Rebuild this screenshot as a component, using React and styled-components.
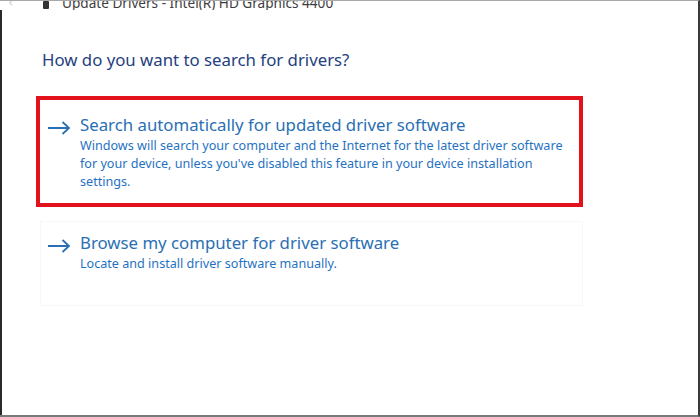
import React from "react";
import styled, { createGlobalStyle } from "styled-components";

const Global = createGlobalStyle`
  html, body { margin: 0; padding: 0; background: #ffffff; }
  body { font-family: "Noto Sans", "Open Sans", sans-serif; }
`;

const Frame = styled.div`
  width: 700px;
  height: 417px;
  box-sizing: border-box;
  display: flex;
  flex-direction: column;
  border-top: 1px solid #a8a8a8;
  border-right: 2px solid #3a3a3a;
  border-bottom: 2px solid #7a7a7a;
  background: #fff;
  overflow: hidden;
`;

const TitleBar = styled.div`
  height: 9px;
  flex: none;
  display: flex;
  align-items: flex-end;
  overflow: hidden;
  padding-left: 8px;
`;

const BackGlyph = styled.span`
  font-family: "DejaVu Sans", sans-serif;
  font-size: 14px;
  line-height: 14px;
  color: #d0d0d0;
  width: 35px;
  margin-bottom: 1px;
`;

const AppIcon = styled.span`
  width: 6px;
  height: 8px;
  background: #333;
  margin-right: 13px;
  margin-bottom: 1px;
  border-radius: 1px;
`;

const TitleText = styled.span`
  font-size: 13.6px;
  line-height: 14px;
  color: #3c3c3c;
  margin-bottom: 0px;
`;

const Body = styled.div`
  flex: 1;
  border-left: 2px solid #2a2a2a;
  padding: 39px 0 0 40px;
  display: flex;
  flex-direction: column;
`;

const Heading = styled.h1`
  margin: 0 0 25px 0;
  font-weight: 400;
  font-size: 16.8px;
  line-height: 22px;
  color: #24407e;
`;

const Option = styled.div`
  width: ${(p) => p.$w}px;
  box-sizing: border-box;
  margin-left: ${(p) => p.$ml}px;
  margin-bottom: ${(p) => p.$mb}px;
  height: ${(p) => p.$h}px;
  border: ${(p) => (p.$highlight ? "4.5px solid #e2121c" : "1px solid #f6f7f8")};
  display: flex;
  gap: 9px;
  padding: ${(p) => p.$pad};
`;

const Arrow = styled.svg`
  flex: none;
  width: 24px;
  height: 14px;
  margin-top: 8px;
`;

const OptionText = styled.div`
  display: flex;
  flex-direction: column;
`;

const OptionTitle = styled.div`
  font-size: 16.8px;
  line-height: 24px;
  color: #2a6fb3;
`;

const OptionDesc = styled.div`
  font-size: 12.6px;
  line-height: 18px;
  color: #1f72c2;
  max-width: 492px;
`;

const ArrowIcon = () => (
  <Arrow viewBox="0 0 24 14">
    <path d="M1 7 H22 M15.5 1 L22 7 L15.5 13" fill="none" stroke="#2a6fb3" strokeWidth="1.8" />
  </Arrow>
);

export default function App() {
  return (
    <>
      <Global />
      <Frame>
        <TitleBar>
          <BackGlyph>‹</BackGlyph>
          <AppIcon />
          <TitleText>Update Drivers - Intel(R) HD Graphics 4400</TitleText>
        </TitleBar>
        <Body>
          <Heading>How do you want to search for drivers?</Heading>
          <Option $highlight $w={547} $ml={-6} $mb={14} $h={111} $pad="13px 0 0 7px">
            <ArrowIcon />
            <OptionText>
              <OptionTitle>Search automatically for updated driver software</OptionTitle>
              <OptionDesc>
                Windows will search your computer and the Internet for the latest driver software
                for your device, unless you've disabled this feature in your device installation
                settings.
              </OptionDesc>
            </OptionText>
          </Option>
          <Option $w={543} $ml={-2} $mb={0} $h={85} $pad="9px 0 0 6px">
            <ArrowIcon />
            <OptionText>
              <OptionTitle>Browse my computer for driver software</OptionTitle>
              <OptionDesc>Locate and install driver software manually.</OptionDesc>
            </OptionText>
          </Option>
        </Body>
      </Frame>
    </>
  );
}
